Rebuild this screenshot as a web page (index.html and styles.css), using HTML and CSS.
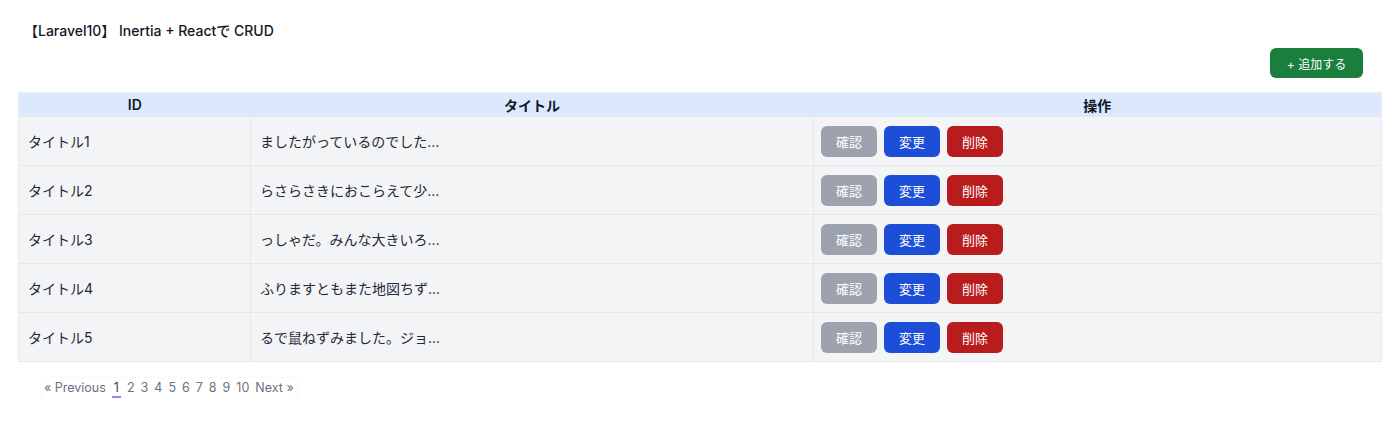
FILE: index.html
```html
<!DOCTYPE html>
<html lang="ja">
<head>
    <meta charset="UTF-8">
    <meta name="viewport" content="width=device-width, initial-scale=1.0">
    <title>Laravel10 CRUD</title>
    <link rel="stylesheet" href="styles.css">
</head>

<body>
    <div class="page">
        <h1 class="page_title">【Laravel10】 Inertia + Reactで CRUD</h1>

        <div class="toolbar">
            <button class="btn btn_add">+ 追加する</button>
        </div>

        <table class="list">
            <thead>
                <tr>
                    <th class="col_id">ID</th>
                    <th class="col_title">タイトル</th>
                    <th class="col_ops">操作</th>
                </tr>
            </thead>
            <tbody>
                <tr>
                    <td>タイトル1</td>
                    <td>ましたがっているのでした...</td>
                    <td class="cell_ops">
                        <div class="ops">
                            <button class="btn btn_show">確認</button>
                            <button class="btn btn_edit">変更</button>
                            <button class="btn btn_delete">削除</button>
                        </div>
                    </td>
                </tr>
                <tr>
                    <td>タイトル2</td>
                    <td>らさらさきにおこらえて少...</td>
                    <td class="cell_ops">
                        <div class="ops">
                            <button class="btn btn_show">確認</button>
                            <button class="btn btn_edit">変更</button>
                            <button class="btn btn_delete">削除</button>
                        </div>
                    </td>
                </tr>
                <tr>
                    <td>タイトル3</td>
                    <td>っしゃだ。みんな大きいろ...</td>
                    <td class="cell_ops">
                        <div class="ops">
                            <button class="btn btn_show">確認</button>
                            <button class="btn btn_edit">変更</button>
                            <button class="btn btn_delete">削除</button>
                        </div>
                    </td>
                </tr>
                <tr>
                    <td>タイトル4</td>
                    <td>ふりますともまた地図ちず...</td>
                    <td class="cell_ops">
                        <div class="ops">
                            <button class="btn btn_show">確認</button>
                            <button class="btn btn_edit">変更</button>
                            <button class="btn btn_delete">削除</button>
                        </div>
                    </td>
                </tr>
                <tr>
                    <td>タイトル5</td>
                    <td>るで鼠ねずみました。ジョ...</td>
                    <td class="cell_ops">
                        <div class="ops">
                            <button class="btn btn_show">確認</button>
                            <button class="btn btn_edit">変更</button>
                            <button class="btn btn_delete">削除</button>
                        </div>
                    </td>
                </tr>
            </tbody>
        </table>

        <div class="pager">
            <div class="pager_box">
                <a href="#">&laquo; Previous</a>
                <a href="#" class="current">1</a>
                <a href="#">2</a>
                <a href="#">3</a>
                <a href="#">4</a>
                <a href="#">5</a>
                <a href="#">6</a>
                <a href="#">7</a>
                <a href="#">8</a>
                <a href="#">9</a>
                <a href="#">10</a>
                <a href="#">Next &raquo;</a>
            </div>
        </div>
    </div>
</body>
</html>
```

FILE: styles.css
```css
* {
    margin: 0;
    padding: 0;
    box-sizing: border-box;
}

body {
    font-family: Inter, "Noto Sans CJK JP", sans-serif;
    color: #111827;
    background-color: #fff;
}

.page {
    padding: 21px 18px 0 18px;
}

.page_title {
    padding-left: 6px;
    font-size: 14px;
    font-weight: 500;
    line-height: 20px;
}

.toolbar {
    display: flex;
    justify-content: flex-end;
    padding: 7px 19px 14px 0;
}

.btn {
    border: none;
    border-radius: 6px;
    color: #fff;
    font-family: inherit;
    font-size: 13px;
    cursor: pointer;
}

.btn_add {
    width: 93px;
    height: 30px;
    background-color: #1a7e3d;
    font-size: 12px;
}

.list {
    width: 100%;
    border-collapse: collapse;
    border: 1px solid #eceef1;
    font-size: 14px;
}

.list th {
    height: 24px;
    background-color: #dbe8fe;
    font-weight: 600;
    text-align: center;
}

.col_id {
    width: 232px;
}

.col_title {
    width: 563px;
}

.list td {
    height: 49px;
    padding: 0 8px 0 9px;
    background-color: #f3f4f6;
    border: 1px solid #e7e8eb;
    color: #1f2937;
}

.list .cell_ops {
    padding-left: 7px;
}

.ops {
    display: flex;
    gap: 7px;
}

.ops .btn {
    width: 56px;
    height: 31px;
}

.btn_show {
    background-color: #9ca3af;
}

.btn_edit {
    background-color: #1d4ed8;
}

.btn_delete {
    background-color: #b91c1c;
}

.pager {
    padding: 14px 0 0 23px;
}

.pager_box {
    display: inline-flex;
    gap: 6px;
    padding: 1px 3px;
    border-radius: 5px;
    box-shadow: 0 0 2px rgba(0, 0, 0, 0.1);
    font-size: 12.5px;
    line-height: 17px;
}

.pager_box a {
    color: #6b7280;
    text-decoration: none;
}

.pager_box .current {
    padding: 0 2px;
    color: #374151;
    border-bottom: 2px solid #818cf8;
}
```
